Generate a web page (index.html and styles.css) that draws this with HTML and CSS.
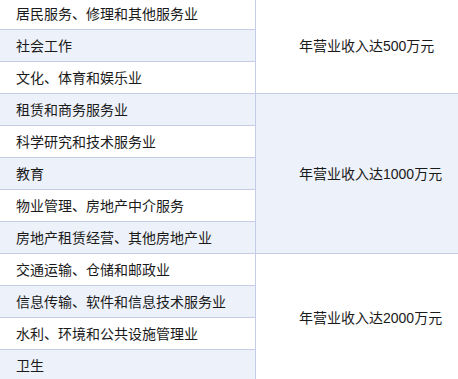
FILE: index.html
```html
<!DOCTYPE html>
<html lang="zh-CN">
<head>
<meta charset="utf-8">
<link rel="stylesheet" href="styles.css">
</head>
<body>
<div class="wrap">
<table class="grid">
  <colgroup><col class="c1"><col class="c2"></colgroup>
  <tbody>
    <tr><td>居民服务、修理和其他服务业</td><td class="std" rowspan="3">年营业收入达500万元</td></tr>
    <tr><td>社会工作</td></tr>
    <tr><td>文化、体育和娱乐业</td></tr>
    <tr><td>租赁和商务服务业</td><td class="std" rowspan="5">年营业收入达1000万元</td></tr>
    <tr><td>科学研究和技术服务业</td></tr>
    <tr><td>教育</td></tr>
    <tr><td>物业管理、房地产中介服务</td></tr>
    <tr><td>房地产租赁经营、其他房地产业</td></tr>
    <tr><td>交通运输、仓储和邮政业</td><td class="std" rowspan="4">年营业收入达2000万元</td></tr>
    <tr><td>信息传输、软件和信息技术服务业</td></tr>
    <tr><td>水利、环境和公共设施管理业</td></tr>
    <tr><td>卫生</td></tr>
  </tbody>
</table>
</div>
</body>
</html>
```
FILE: styles.css
```css
html, body {
  margin: 0;
  padding: 0;
  background: #ffffff;
  overflow: hidden;
}
.wrap {
  width: 458px;
  height: 379px;
  overflow: hidden;
}
.grid {
  border-collapse: collapse;
  table-layout: fixed;
  width: 482px;
  margin-left: -1px;
  margin-top: -3px;
  font-family: "Liberation Sans", "Noto Sans CJK SC", sans-serif;
  font-size: 14px;
  color: #1a1a1a;
}
.c1 { width: 256px; }
.c2 { width: 226px; }
.grid td {
  border: 1px solid #c5cde6;
  height: 32px;
  padding: 0 0 0 16px;
  box-sizing: border-box;
  vertical-align: middle;
  white-space: nowrap;
  line-height: 20px;
}
.grid tr:nth-child(even) {
  background: #edf1f9;
}
.grid td.std {
  padding-left: 43px;
}
```
